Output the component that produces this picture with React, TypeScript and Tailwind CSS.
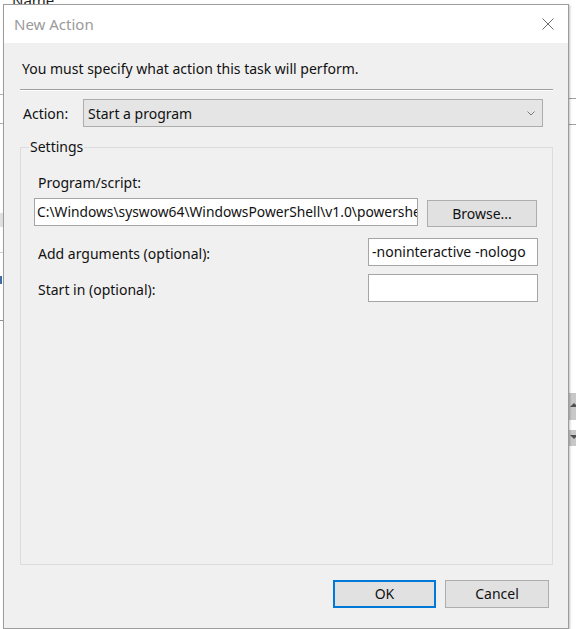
import React from "react";

const font = { fontFamily: '"Noto Sans", "Open Sans", sans-serif' };

export default function App() {
  return (
    <div
      className="relative w-[576px] h-[629px] overflow-hidden bg-white text-[#000]"
      style={font}
    >
      {/* background window content */}
      <div className="absolute left-[12px] top-[-11px] text-[15px] text-[#1e1e1e]">Name</div>
      <div className="absolute left-0 top-[94px] w-[3px] h-px bg-[#b0b0b0]" />
      <div className="absolute left-0 top-[123px] w-[3px] h-px bg-[#b0b0b0]" />
      <div className="absolute left-0 top-[213px] w-[3px] h-[14px] bg-[#e0e0e0]" />
      <div className="absolute left-0 top-[252px] w-[3px] h-px bg-[#d0d0d0]" />
      <div className="absolute left-0 top-[276px] w-[2px] h-[8px] bg-[#3a6ea5]" />
      <div className="absolute left-0 top-[320px] w-[3px] h-px bg-[#909090]" />
      <div className="absolute left-[569px] top-[98px] w-[7px] h-px bg-[#a0a0a0]" />
      <div className="absolute left-[569px] top-[124px] w-[7px] h-px bg-[#a0a0a0]" />
      <div className="absolute left-[569px] top-[393px] w-[7px] h-[27px] bg-[#c8c8c8]">
        <div className="mt-[10px] ml-[1px] w-0 h-0 border-l-[4px] border-r-[4px] border-b-[4px] border-l-transparent border-r-transparent border-b-[#505050]" />
      </div>
      <div className="absolute left-[569px] top-[430px] w-[7px] h-[16px] bg-[#c8c8c8]">
        <div className="mt-[5px] ml-[1px] w-0 h-0 border-l-[4px] border-r-[4px] border-t-[4px] border-l-transparent border-r-transparent border-t-[#505050]" />
      </div>

      {/* dialog */}
      <div className="absolute left-[3px] top-[4px] w-[566px] h-[625px] border border-[#9d9d9d] bg-[#f0f0f0] flex flex-col shadow-[1px_1px_2px_rgba(0,0,0,0.25)]">
        <div className="h-[38px] bg-white flex items-center justify-between pl-[10px] pr-[14px] shrink-0">
          <span className="text-[15px] text-[#9a9a9a] leading-[20px]">New Action</span>
          <svg width="12" height="12" viewBox="0 0 12 12" className="block">
            <path d="M0.5 0.5 L11.5 11.5 M11.5 0.5 L0.5 11.5" stroke="#6f6f6f" strokeWidth="1" fill="none" />
          </svg>
        </div>

        <div className="flex-1 flex flex-col pl-[16px] pr-[15px]">
          <div className="mt-[16px] pl-[2px] text-[14px] leading-[20px] text-[#111]">
            You must specify what action this task will perform.
          </div>
          <div className="mt-[10px] h-[2px] border-t border-[#a0a0a0] border-b border-b-white" />

          <div className="mt-[8px] flex items-center">
            <span className="pl-[3px] w-[63px] text-[14px] leading-[20px] text-[#111] pt-[1px]">Action:</span>
            <div className="w-[460px] h-[28px] border border-[#adadad] bg-[#e5e5e5] flex items-center justify-between pl-[4px] pr-[7px]">
              <span className="text-[14px] leading-[20px] text-[#111] pt-[1px]">Start a program</span>
              <svg width="8" height="5" viewBox="0 0 8 5" className="block">
                <path d="M0.5 0.5 L4 4 L7.5 0.5" stroke="#7a7a7a" strokeWidth="1" fill="none" />
              </svg>
            </div>
          </div>

          <fieldset className="mt-[10px] flex-1 border border-[#dcdcdc] pl-[13px] pr-[14px] pt-0 m-0 min-w-0">
            <legend className="ml-[-5px] px-[1px] text-[14px] leading-[20px] text-[#111]">Settings</legend>
            <div className="mt-[16px] pl-[4px] text-[14px] leading-[20px] text-[#111]">Program/script:</div>
            <div className="mt-[5px] flex items-start">
              <div className="w-[384px] h-[28px] border border-[#a5a5a5] bg-white flex items-center pl-[2px] overflow-hidden whitespace-nowrap">
                <span className="text-[13.8px] leading-[20px] text-[#111]">
                  C:\Windows\syswow64\WindowsPowerShell\v1.0\powershe
                </span>
              </div>
              <div className="ml-[9px] mt-[2px] w-[110px] h-[27px] border border-[#adadad] bg-[#e1e1e1] flex items-center justify-center text-[14px] leading-[20px] text-[#111]">
                Browse...
              </div>
            </div>
            <div className="mt-[11px] flex items-center justify-between">
              <span className="pl-[4px] mt-[3px] text-[14px] leading-[20px] text-[#111]">Add arguments (optional):</span>
              <div className="w-[170px] h-[28px] border border-[#a5a5a5] bg-white flex items-center pl-[3px] overflow-hidden whitespace-nowrap">
                <span className="text-[14px] leading-[20px] text-[#111]">-noninteractive -nologo</span>
              </div>
            </div>
            <div className="mt-[8px] flex items-center justify-between">
              <span className="pl-[4px] mt-[3px] text-[14px] leading-[20px] text-[#111]">Start in (optional):</span>
              <div className="w-[170px] h-[28px] border border-[#a5a5a5] bg-white" />
            </div>
          </fieldset>

          <div className="mt-[15px] mb-[20px] flex justify-end gap-[9px] pr-[4px]">
            <div className="w-[103px] h-[28px] border-2 border-[#0078d7] bg-[#e1e1e1] flex items-center justify-center text-[14px] leading-[20px] text-[#111]">
              OK
            </div>
            <div className="w-[104px] h-[28px] border border-[#adadad] bg-[#e1e1e1] flex items-center justify-center text-[14px] leading-[20px] text-[#111]">
              Cancel
            </div>
          </div>
        </div>
      </div>
    </div>
  );
}
